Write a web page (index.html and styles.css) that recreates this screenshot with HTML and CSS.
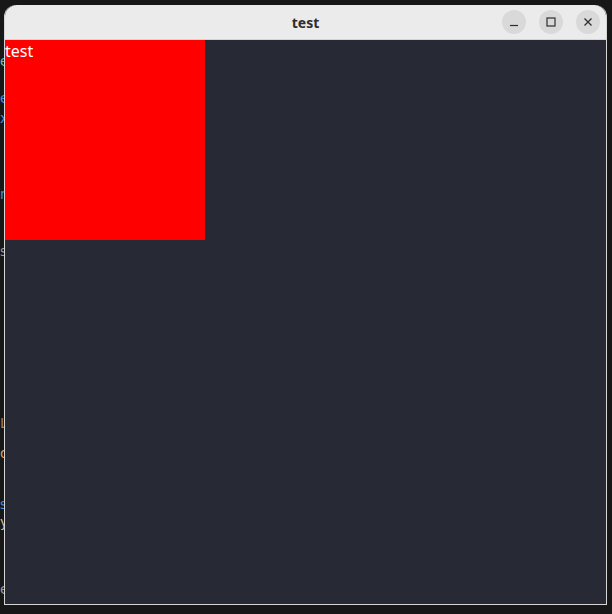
FILE: index.html
```html
<!DOCTYPE html>
<html lang="en">
<head>
  <meta charset="UTF-8" />
  <meta name="viewport" content="width=device-width, initial-scale=1.0"/>
  <title>test</title>
  <link rel="stylesheet" href="styles.css">
</head>
<body>
  <div class="desktop">
    <div class="code-behind">
      <div class="line l-teal" style="margin-top:52px">e</div>
      <div class="line l-blue" style="margin-top:19px">e</div>
      <div class="line l-blue" style="margin-top:2px">x</div>
      <div class="line l-blue" style="margin-top:58px">n</div>
      <div class="line l-grey" style="margin-top:39px">s</div>
      <div class="line l-brown" style="margin-top:154px">L</div>
      <div class="line l-orange" style="margin-top:12px">d</div>
      <div class="line l-blue" style="margin-top:33px">s</div>
      <div class="line l-tan" style="margin-top:0">y</div>
      <div class="line l-grey" style="margin-top:49px">e</div>
    </div>

    <div class="window">
      <div class="titlebar">
        <span class="title">test</span>
        <div class="controls">
          <button class="ctl" aria-label="minimize">
            <svg width="10" height="10" viewBox="0 0 10 10"><path d="M1 8.5h8" stroke="#2e2e2e" stroke-width="1.2"/></svg>
          </button>
          <button class="ctl" aria-label="maximize">
            <svg width="10" height="10" viewBox="0 0 10 10"><rect x="1" y="1" width="8" height="8" fill="none" stroke="#2e2e2e" stroke-width="1.2"/></svg>
          </button>
          <button class="ctl" aria-label="close">
            <svg width="10" height="10" viewBox="0 0 10 10"><path d="M1.5 1.5l7 7M8.5 1.5l-7 7" stroke="#2e2e2e" stroke-width="1.3"/></svg>
          </button>
        </div>
      </div>
      <div class="content">
        <div class="box">test</div>
      </div>
    </div>
  </div>
</body>
</html>
```

FILE: styles.css
```css
html, body {
  margin: 0;
  padding: 0;
  height: 100%;
}
body {
  background: #171717;
  overflow: hidden;
}
.desktop {
  position: relative;
  width: 612px;
  height: 614px;
}
.code-behind {
  width: 7px;
  overflow: hidden;
  font-family: "DejaVu Sans", sans-serif;
  font-size: 14px;
  line-height: 18px;
  text-align: right;
}
.line {
  height: 18px;
}
.l-teal { color: #4ec9b0; }
.l-blue { color: #3b8eea; }
.l-grey { color: #9a9a9a; }
.l-brown { color: #a08060; }
.l-orange { color: #d7a05a; }
.l-tan { color: #d6c08a; }

.window {
  position: absolute;
  left: 4px;
  top: 5px;
  width: 601px;
  height: 599px;
  border: 1px solid #d6d6d6;
  border-top: none;
  border-radius: 12px 12px 0 0;
  display: flex;
  flex-direction: column;
  background: #272a35;
}
.titlebar {
  position: relative;
  height: 34px;
  background: #ebebeb;
  border-radius: 12px 12px 0 0;
  border-bottom: 1px solid #d4d4d4;
  display: flex;
  align-items: center;
  justify-content: center;
  flex-shrink: 0;
}
.title {
  font-family: "Noto Sans", sans-serif;
  font-weight: bold;
  font-size: 14px;
  color: #2e2e2e;
}
.controls {
  position: absolute;
  right: 6px;
  top: 5px;
  display: flex;
  gap: 13px;
}
.ctl {
  width: 24px;
  height: 24px;
  border: none;
  border-radius: 50%;
  background: #d9d9d9;
  padding: 0;
  display: flex;
  align-items: center;
  justify-content: center;
}
.content {
  flex: 1;
  background: #272a35;
}
.box {
  width: 200px;
  height: 200px;
  background: #ff0000;
  color: #ffffff;
  font-family: "Noto Sans", sans-serif;
  font-size: 16px;
  line-height: 22px;
}
```
